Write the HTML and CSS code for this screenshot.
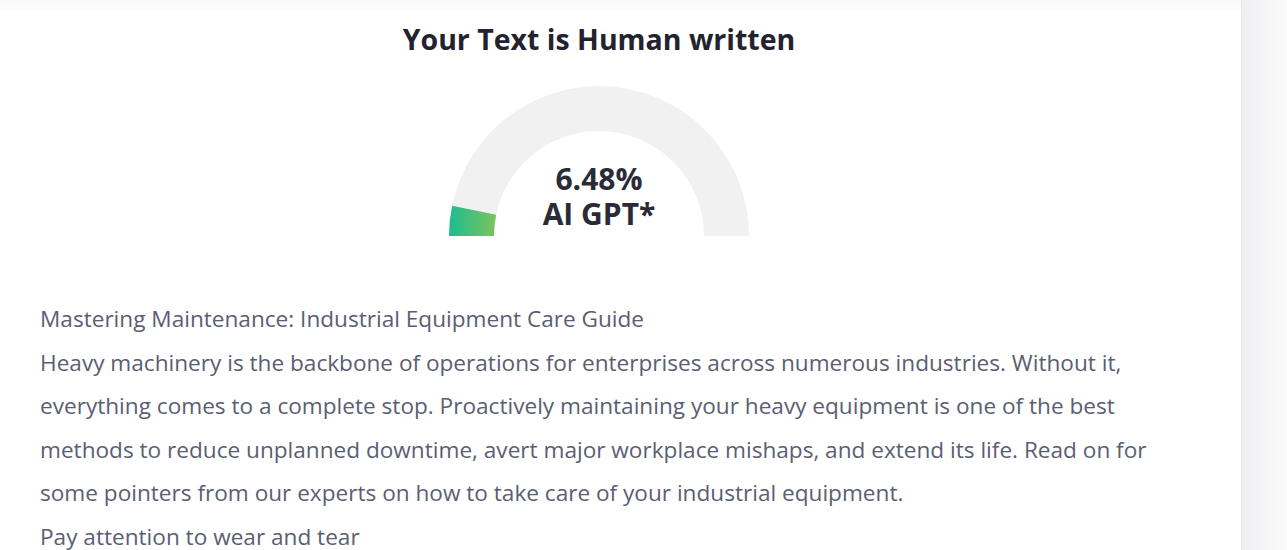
FILE: index.html
```html
<!DOCTYPE html>
<html>

<head>
  <title>AI Detector Result</title>
  <link rel="stylesheet" href="styles.css">
</head>
<body>
<div class="page">
  <div class="main">
    <div class="top-shade"></div>
    <h2 class="result-title">Your Text is Human written</h2>
    <div class="gauge">
      <svg width="300" height="150" viewBox="0 0 300 150">
        <defs>
          <linearGradient id="scoreFill" x1="0" y1="0" x2="1" y2="0">
            <stop offset="0" stop-color="#1dbd92"/>
            <stop offset="1" stop-color="#7cc35a"/>
          </linearGradient>
        </defs>
        <path d="M 0 150 A 150 150 0 0 1 300 150 L 255 150 A 105 105 0 0 0 45 150 Z" fill="#f1f1f1"/>
        <path d="M 0 150 A 150 150 0 0 1 3.10 119.67 L 47.17 128.77 A 105 105 0 0 0 45 150 Z" fill="url(#scoreFill)"/>
      </svg>
      <div class="gauge-label">
        <div class="gauge-value">6.48%</div>
        <div class="gauge-value">AI GPT*</div>
      </div>
    </div>
    <div class="text-body">
      <p>Mastering Maintenance: Industrial Equipment Care Guide</p>
      <p>Heavy machinery is the backbone of operations for enterprises across numerous industries. Without it, everything comes to a complete stop. Proactively maintaining your heavy equipment is one of the best methods to reduce unplanned downtime, avert major workplace mishaps, and extend its life. Read on for some pointers from our experts on how to take care of your industrial equipment.</p>
      <p>Pay attention to wear and tear</p>
    </div>
  </div>
  <div class="side"></div>
</div>
</body>

</html>
```

FILE: styles.css
```css
body {
    margin: 0;
    font-family: "Open Sans", "Noto Sans", sans-serif;
    background: #ffffff;
    overflow: hidden;
  }
  .page {
    display: flex;
    height: 550px;
  }
  .main {
    width: 1241px;
    flex-shrink: 0;
    box-sizing: border-box;
    padding: 0 83px 0 40px;
  }
  .top-shade {
    height: 10px;
    margin: 0 -83px 0 -40px;
    background: linear-gradient(to bottom, #f9f9f9, #fdfdfd);
  }
  .result-title {
    margin: 11px 0 0;
    text-align: center;
    font-size: 28.5px;
    font-weight: 700;
    line-height: 37px;
    color: #23232f;
  }
  .gauge {
    position: relative;
    width: 300px;
    height: 150px;
    margin: 28px auto 0;
  }
  .gauge svg {
    display: block;
  }
  .gauge-label {
    position: absolute;
    left: 0;
    right: 0;
    top: 77px;
    text-align: center;
    font-size: 30px;
    font-weight: 700;
    color: #2a2b36;
  }
  .gauge-value {
    height: 35px;
    line-height: 32px;
  }
  .text-body {
    margin-top: 61px;
    color: #5b5e72;
    font-size: 22.6px;
    line-height: 43.5px;
  }
  .text-body p {
    margin: 0;
  }
  .side {
    flex: 1;
    border-left: 1px solid #e4e4ec;
    background: linear-gradient(to right, #f0f0f3, #fafafa);
  }
```
